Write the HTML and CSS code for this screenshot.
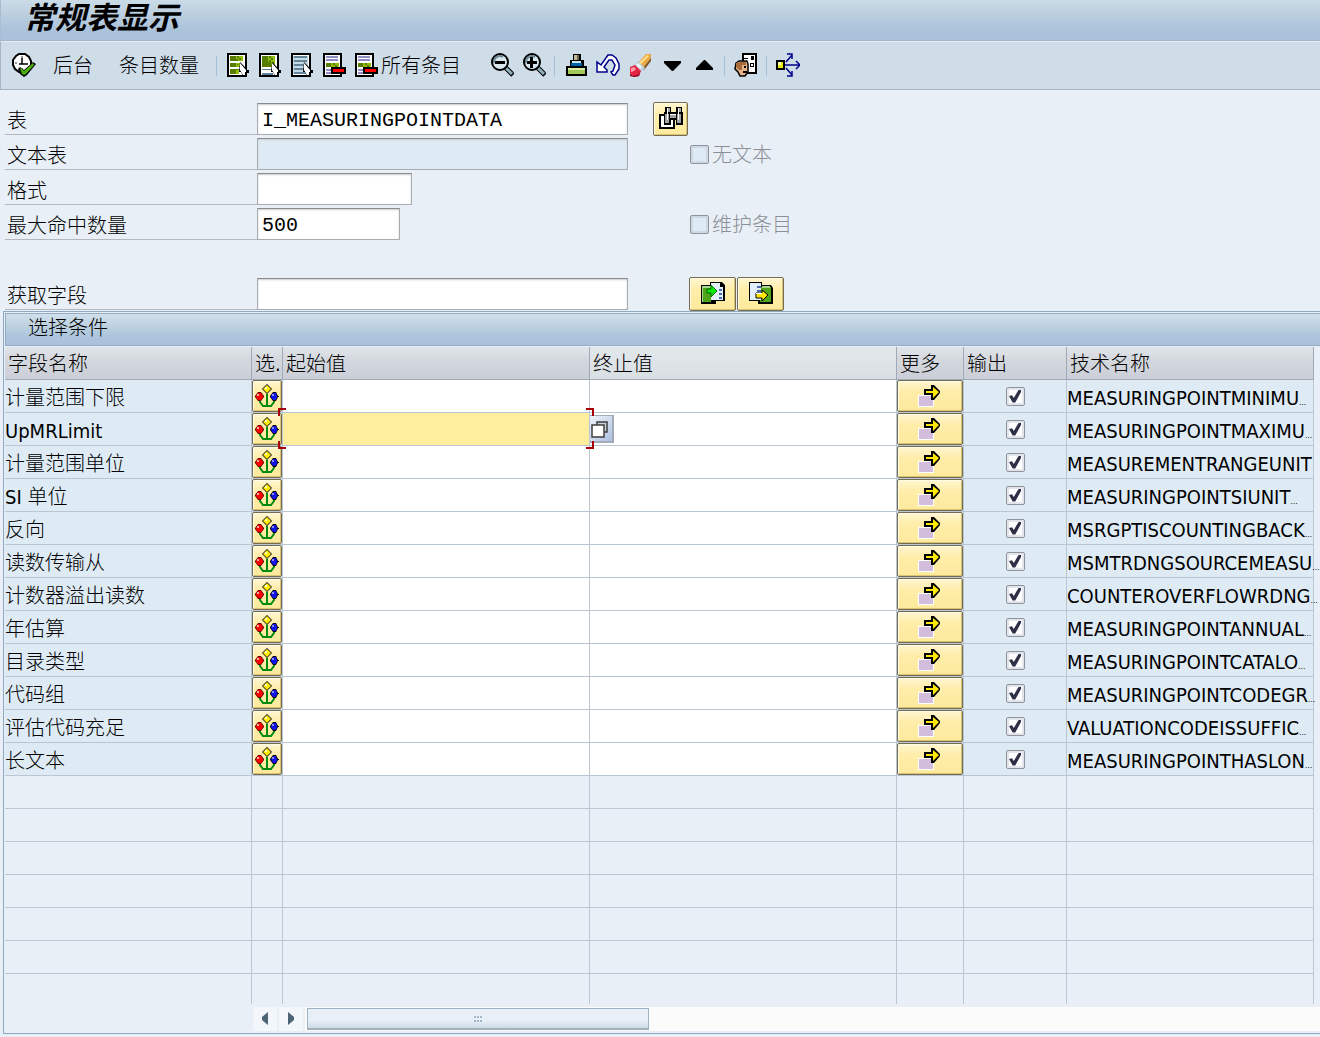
FILE: index.html
```html
<!DOCTYPE html>
<html lang="zh-CN">
<head>
<meta charset="utf-8">
<meta name="viewport" content="width=device-width, initial-scale=1">
<title>常规表显示</title>
<link rel="stylesheet" href="styles.css">
</head>
<body>
<svg class="sprite" aria-hidden="true">
  <symbol id="i-run" viewBox="0 0 24 24">
    <path d="M7 1h6l4 3 2 4v5l-3 4-4 2H7l-4-3-2-4V7l3-4z" fill="#fff" stroke="#000" stroke-width="2"/>
    <path d="M9 3h2v2H9zM3 9h2v2H3zM9 15h2v2H9z" fill="#999"/>
    <path d="M10 5v6M7 11h9" stroke="#000" stroke-width="1.5" fill="none"/>
    <path d="M6 16l2-2 4 3 9-8 3 2-9 11-3 2-4-3z" fill="#000"/>
    <path d="M8 16l1-1 3 3 9-8 1 2-8 9-2 1-2-1z" fill="#4caf10"/>
  </symbol>
  <symbol id="i-cursor" viewBox="0 0 24 24">
    <path d="M14 9l4 4 3 4h2v3h-3v3h-3l-2-4h-2z" fill="#000"/>
    <path d="M14 10l6 7v2h-1v3h-2l-3-5z" fill="#fff"/>
  </symbol>
  <symbol id="i-list" viewBox="0 0 24 24">
    <path d="M2 1h18v22H2z" fill="#fff" stroke="#000" stroke-width="2"/>
    <path d="M4 3h9v5H4zM4 10h9v4H4zM4 16h9v5H4z" fill="#567d00"/>
    <path d="M10 3h7v5h-7zM10 10h4v4h-4zM10 17h3v4h-3z" fill="#8fbd08"/>
    <path d="M11 3h2v2h-2zM13 5h2v2h-2zM10 6h2v2h-2zM11 11h1v1h-1z" fill="#567d00"/>
    <use href="#i-cursor"/>
  </symbol>
  <symbol id="i-block" viewBox="0 0 24 24">
    <path d="M2 1h18v22H2z" fill="#fff" stroke="#000" stroke-width="2"/>
    <path d="M4 3h13v11H4z" fill="#567d00"/>
    <path d="M10 3h7v11h-4V9h-3z" fill="#8fbd08"/>
    <path d="M11 3h2v2h-2zM13 5h2v2h-2zM11 7h2v2h-2zM14 9h2v2h-2z" fill="#567d00"/>
    <path d="M4 16h10v1H4zM4 20h11v2H4z" fill="#5f8096"/>
    <use href="#i-cursor"/>
  </symbol>
  <symbol id="i-lines" viewBox="0 0 24 24">
    <path d="M2 1h18v22H2z" fill="#fff" stroke="#000" stroke-width="2"/>
    <path d="M3 3h15v18H3z" fill="#c6dbe8"/>
    <path d="M4 4h13M4 8h13M4 12h11M4 16h11M4 20h12" stroke="#668598" stroke-width="2"/>
    <use href="#i-cursor"/>
  </symbol>
  <symbol id="i-remove" viewBox="0 0 24 24">
    <path d="M2 1h17v22H2z" fill="#fff" stroke="#000" stroke-width="2"/>
    <path d="M4 4h12M4 7h12M4 17h7M4 20h10" stroke="#8f8dc3" stroke-width="2"/>
    <path d="M4 10h13v4H4z" fill="#8fbd08"/>
    <path d="M4 10h5v4H4zM11 10h2v2h-2zM13 12h2v2h-2z" fill="#567d00"/>
    <path d="M10 15h13v5H10z" fill="#f00" stroke="#000" stroke-width="2"/>
  </symbol>
  <symbol id="i-zoomout" viewBox="0 0 24 24">
    <path d="M15 14l8 8" stroke="#000" stroke-width="5"/>
    <path d="M16 15l6 6" stroke="#91b1bc" stroke-width="3"/>
    <circle cx="10" cy="9" r="8" fill="#d9e7ef" stroke="#000" stroke-width="2"/>
    <path d="M4 10a6 6 0 0 1 9-6" stroke="#6c8997" stroke-width="2" fill="none"/>
    <path d="M5 8h10v3H5z" fill="#000"/>
  </symbol>
  <symbol id="i-zoomin" viewBox="0 0 24 24">
    <use href="#i-zoomout"/>
    <path d="M8 4h3v11H8z" fill="#000"/>
  </symbol>
  <symbol id="i-print" viewBox="0 0 24 24">
    <path d="M9 1h8v6h3v6h3v10H2V13h4V7h3z" fill="#000"/>
    <path d="M10 2h4v5h-4z" fill="#c0ba94"/><path d="M13 2h2v5h-2z" fill="#706a48"/>
    <path d="M8 8h9v2H8z" fill="#cde5f5"/><path d="M7 10h11v3H7z" fill="#0062a8"/>
    <path d="M4 15h17v6H4z" fill="#a4c858"/><path d="M4 15h17v2H4z" fill="#dceaa6"/>
  </symbol>
  <symbol id="i-undo" viewBox="0 0 24 24">
    <path d="M1 9v10h10v-2l-3-3 5-7h3l3 5-2 6-2 1 2 3h2l4-6v-5l-3-6-4-3h-4L5 12z" fill="#fff" stroke="#00008b" stroke-width="1.5"/>
  </symbol>
  <symbol id="i-erase" viewBox="0 0 24 24">
    <path d="M10 10L18 1h5v4l-8 10z" fill="#e8a848"/>
    <path d="M11 10l8-8 2 1-9 9z" fill="#ffe08a"/>
    <path d="M15 15l8-10v3l-7 9z" fill="#80531c"/>
    <path d="M6 12l4-4 7 7-4 4z" fill="#bcd0db"/>
    <path d="M8 12l2-2 4 4-2 2z" fill="#e8f4fa"/>
    <path d="M2 14l5-2 6 6-2 5-5 1-4-3z" fill="#e52545"/>
    <path d="M3 15l3-1 2 2-2 2-3 1z" fill="#ff9cac"/>
    <path d="M2 21l3 2 5-1 2-3-1 4-5 1-4-1z" fill="#800018"/>
  </symbol>
  <symbol id="i-down" viewBox="0 0 24 24"><path d="M4 8h17v2l-8 8h-1L4 10z" fill="#000"/></symbol>
  <symbol id="i-up" viewBox="0 0 24 24"><path d="M4 17h17v-2l-8-8h-1l-8 8z" fill="#000"/></symbol>
  <symbol id="i-user" viewBox="0 0 24 24">
    <path d="M9 1h13v19H9z" fill="#fff" stroke="#000" stroke-width="2"/>
    <path d="M10 5h4v1h-4zM17 3h3v4h-3zM16 10h4v4h-4z" fill="#000"/><path d="M17 11h2v2h-2z" fill="#fff"/>
    <path d="M2 10l3-2h8l1 3v8l-3 4H6l-2-4-3-3z" fill="#e7b585" stroke="#000" stroke-width="1.5"/>
    <path d="M2 10l3-1h7v3H8v5H5l-3-3z" fill="#a76c3c"/><path d="M10 13h2v2h-2zM9 18h4v2H9z" fill="#000"/>
  </symbol>
  <symbol id="i-branch" viewBox="0 0 24 24">
    <path d="M9 12h15M10 9l6-7M10 15l6 7M11 1h5v5M11 23h5v-5M20 8l4 4-4 4" stroke="#00008b" stroke-width="1.5" fill="none"/>
    <path d="M1 8h7v8H1z" fill="#e8ec13" stroke="#000" stroke-width="2"/><path d="M2 9h3v3H2z" fill="#ffffb0"/>
  </symbol>
  <symbol id="i-find" viewBox="0 0 24 24">
    <path d="M1 8h14v13H1z" fill="#fff" stroke="#000" stroke-width="2"/>
    <path d="M6 0h6v5h5V0h6v5h1v13h-7v-5h-5v5H5V5h1z" fill="#000"/>
    <path d="M8 1h3v4H8zM19 1h3v4h-3zM6 7h4v9H6zM11 7h6v4h-6zM18 7h4v9h-4z" fill="#a3a3a3"/>
    <path d="M8 1h1v12H8zM19 1h1v12h-1zM11 7h6v1h-6z" fill="#fff"/>
  </symbol>
  <symbol id="i-import" viewBox="0 0 24 24">
    <path d="M0 3h9V0h12l3 3v16h-9v3H0z" fill="#000"/>
    <path d="M1 4h9v16H1z" fill="#4ea51a"/><path d="M1 4h9v2H1zM1 4h1v16H1z" fill="#a9d88c"/>
    <path d="M10 1h9v4h3v13H10z" fill="#e2f0fa"/><path d="M18 7h3v2h-3zM18 11h3v2h-3zM18 15h3v2h-3z" fill="#506ba8"/>
    <path d="M6 7h4V3l6 6-6 6v-4H6z" fill="#0be60b" stroke="#066a06"/>
  </symbol>
  <symbol id="i-export" viewBox="0 0 24 24">
    <path d="M0 0h13v3h9l2 3v16H9v-3H0z" fill="#000"/>
    <path d="M12 5h10v15H11z" fill="#4ea51a"/><path d="M13 4h8v2h-8z" fill="#a9d88c"/>
    <path d="M1 1h11v17H1z" fill="#e2f0fa"/><path d="M8 4h4v2H8zM8 8h4v2H8z" fill="#506ba8"/>
    <path d="M7 11h6V8l6 5-6 6v-3H7z" fill="#ffe800" stroke="#000"/><path d="M7 11h6v1H7z" fill="#fff"/>
  </symbol>
  <symbol id="i-option" viewBox="0 0 24 24">
    <path d="M11 10h2v12h-2z" fill="#008a10"/>
    <path d="M5 16v2l3 4h8l3-4v-2" stroke="#008a10" stroke-width="2" fill="none"/>
    <path d="M12 0l5 5-5 5-5-5z" fill="#000"/><path d="M12 1l4 4-4 4-4-4z" fill="#ffec00"/><path d="M10 3h2v2h-2z" fill="#ffffc0"/>
    <path d="M3 8h3l3 4v1l-3 4H3l-3-4v-1z" fill="#600"/><path d="M3 9h3l2 3v1l-2 3H3l-2-3v-1z" fill="#f00"/><path d="M2 10h2v2H2z" fill="#faa"/>
    <path d="M18 8h3l2 4h1v1h-1l-2 4h-3l-3-4v-1z" fill="#000"/><path d="M18 9h3l1 3v1l-1 3h-3l-2-3v-1z" fill="#1414e8"/><path d="M17 10h2v2h-2z" fill="#88f"/>
  </symbol>
  <symbol id="i-more" viewBox="0 0 24 24">
    <path d="M0 11h16v12H0z" fill="#fff"/><path d="M1 12h14v10H1z" fill="#d3bddd"/>
    <path d="M6 5h7V1h3l6 6v2l-6 7h-3v-5H6z" fill="#000"/>
    <path d="M8 7h7V3l6 5-6 6v-5H8z" fill="#ffe900"/>
  </symbol>
  <symbol id="i-match" viewBox="0 0 20 20">
    <path d="M7 3h10v10H7z" fill="#c3d4de" stroke="#403c3c" stroke-width="1.5"/>
    <path d="M2 6h12v12H2z" fill="#fff" stroke="#403c3c" stroke-width="1.5"/>
  </symbol>
</svg>

<header class="titlebar"><h1>常规表显示</h1></header>

<nav class="toolbar" aria-label="工具栏">
  <button class="tool" aria-label="执行"><svg><use href="#i-run"/></svg></button>
  <button class="tool text">后台</button>
  <button class="tool text">条目数量</button>
  <span class="sep"></span>
  <button class="tool" aria-label="全选"><svg><use href="#i-list"/></svg></button>
  <button class="tool" aria-label="选择块"><svg><use href="#i-block"/></svg></button>
  <button class="tool" aria-label="取消全选"><svg><use href="#i-lines"/></svg></button>
  <button class="tool" aria-label="删除条目"><svg><use href="#i-remove"/></svg></button>
  <button class="tool wide"><svg><use href="#i-remove"/></svg>所有条目</button>
  <button class="tool" aria-label="缩小"><svg><use href="#i-zoomout"/></svg></button>
  <button class="tool" aria-label="放大"><svg><use href="#i-zoomin"/></svg></button>
  <span class="sep"></span>
  <button class="tool" aria-label="变式"><svg><use href="#i-print"/></svg></button>
  <button class="tool" aria-label="撤销"><svg><use href="#i-undo"/></svg></button>
  <button class="tool" aria-label="清除"><svg><use href="#i-erase"/></svg></button>
  <button class="tool" aria-label="下移"><svg><use href="#i-down"/></svg></button>
  <button class="tool" aria-label="上移"><svg><use href="#i-up"/></svg></button>
  <span class="sep"></span>
  <button class="tool" aria-label="用户设置"><svg><use href="#i-user"/></svg></button>
  <span class="sep"></span>
  <button class="tool" aria-label="分支"><svg><use href="#i-branch"/></svg></button>
</nav>

<main>
  <form class="form">
    <div class="field">
      <label for="table">表</label>
      <input id="table" class="box long" type="text" value="I_MEASURINGPOINTDATA">
      <button type="button" class="yellow find" aria-label="查找"><svg><use href="#i-find"/></svg></button>
    </div>
    <div class="field">
      <label for="texttable">文本表</label>
      <input id="texttable" class="box long" type="text" disabled>
      <label class="option"><input type="checkbox" class="tick" disabled><span>无文本</span></label>
    </div>
    <div class="field">
      <label for="layout">格式</label>
      <input id="layout" class="box medium" type="text">
    </div>
    <div class="field">
      <label for="hits">最大命中数量</label>
      <span class="slot"><input id="hits" class="box short" type="text" value="500"></span>
      <label class="option"><input type="checkbox" class="tick" disabled><span>维护条目</span></label>
    </div>
    <div class="field spaced">
      <label for="getfield">获取字段</label>
      <input id="getfield" class="box long" type="text">
      <span class="pair">
        <button type="button" class="yellow" aria-label="导入"><svg><use href="#i-import"/></svg></button>
        <button type="button" class="yellow" aria-label="导出"><svg><use href="#i-export"/></svg></button>
      </span>
    </div>
  </form>

  <section class="panel">
    <h2>选择条件</h2>
    <table class="grid">
      <colgroup><col class="c-name"><col class="c-sel"><col><col><col class="c-more"><col class="c-out"><col class="c-name"></colgroup>
      <thead><tr><th>字段名称</th><th class="tight">选.</th><th>起始值</th><th class="light">终止值</th><th>更多</th><th>输出</th><th>技术名称</th></tr></thead>
      <tbody>
        <tr><td class="txt">计量范围下限</td><td><button class="yellow" aria-label="选项"><svg><use href="#i-option"/></svg></button></td><td class="value"><input type="text" aria-label="起始值"></td><td class="value"><input type="text" aria-label="终止值"></td><td><button class="yellow" aria-label="更多"><svg><use href="#i-more"/></svg></button></td><td class="out"><input type="checkbox" class="tick" aria-label="输出" checked></td><td class="txt">MEASURINGPOINTMINIMU<small>…</small></td></tr>
        <tr><td class="txt">UpMRLimit</td><td><button class="yellow" aria-label="选项"><svg><use href="#i-option"/></svg></button></td><td class="value active"><input type="text" aria-label="起始值"><span class="focus"></span></td><td class="value"><input type="text" aria-label="终止值"><button class="match" aria-label="可能的条目"><svg><use href="#i-match"/></svg></button></td><td><button class="yellow" aria-label="更多"><svg><use href="#i-more"/></svg></button></td><td class="out"><input type="checkbox" class="tick" aria-label="输出" checked></td><td class="txt">MEASURINGPOINTMAXIMU<small>…</small></td></tr>
        <tr><td class="txt">计量范围单位</td><td><button class="yellow" aria-label="选项"><svg><use href="#i-option"/></svg></button></td><td class="value"><input type="text" aria-label="起始值"></td><td class="value"><input type="text" aria-label="终止值"></td><td><button class="yellow" aria-label="更多"><svg><use href="#i-more"/></svg></button></td><td class="out"><input type="checkbox" class="tick" aria-label="输出" checked></td><td class="txt">MEASUREMENTRANGEUNIT</td></tr>
        <tr><td class="txt">SI 单位</td><td><button class="yellow" aria-label="选项"><svg><use href="#i-option"/></svg></button></td><td class="value"><input type="text" aria-label="起始值"></td><td class="value"><input type="text" aria-label="终止值"></td><td><button class="yellow" aria-label="更多"><svg><use href="#i-more"/></svg></button></td><td class="out"><input type="checkbox" class="tick" aria-label="输出" checked></td><td class="txt">MEASURINGPOINTSIUNIT<small>…</small></td></tr>
        <tr><td class="txt">反向</td><td><button class="yellow" aria-label="选项"><svg><use href="#i-option"/></svg></button></td><td class="value"><input type="text" aria-label="起始值"></td><td class="value"><input type="text" aria-label="终止值"></td><td><button class="yellow" aria-label="更多"><svg><use href="#i-more"/></svg></button></td><td class="out"><input type="checkbox" class="tick" aria-label="输出" checked></td><td class="txt">MSRGPTISCOUNTINGBACK<small>…</small></td></tr>
        <tr><td class="txt">读数传输从</td><td><button class="yellow" aria-label="选项"><svg><use href="#i-option"/></svg></button></td><td class="value"><input type="text" aria-label="起始值"></td><td class="value"><input type="text" aria-label="终止值"></td><td><button class="yellow" aria-label="更多"><svg><use href="#i-more"/></svg></button></td><td class="out"><input type="checkbox" class="tick" aria-label="输出" checked></td><td class="txt">MSMTRDNGSOURCEMEASU<small>…</small></td></tr>
        <tr><td class="txt">计数器溢出读数</td><td><button class="yellow" aria-label="选项"><svg><use href="#i-option"/></svg></button></td><td class="value"><input type="text" aria-label="起始值"></td><td class="value"><input type="text" aria-label="终止值"></td><td><button class="yellow" aria-label="更多"><svg><use href="#i-more"/></svg></button></td><td class="out"><input type="checkbox" class="tick" aria-label="输出" checked></td><td class="txt">COUNTEROVERFLOWRDNG<small>…</small></td></tr>
        <tr><td class="txt">年估算</td><td><button class="yellow" aria-label="选项"><svg><use href="#i-option"/></svg></button></td><td class="value"><input type="text" aria-label="起始值"></td><td class="value"><input type="text" aria-label="终止值"></td><td><button class="yellow" aria-label="更多"><svg><use href="#i-more"/></svg></button></td><td class="out"><input type="checkbox" class="tick" aria-label="输出" checked></td><td class="txt">MEASURINGPOINTANNUAL<small>…</small></td></tr>
        <tr><td class="txt">目录类型</td><td><button class="yellow" aria-label="选项"><svg><use href="#i-option"/></svg></button></td><td class="value"><input type="text" aria-label="起始值"></td><td class="value"><input type="text" aria-label="终止值"></td><td><button class="yellow" aria-label="更多"><svg><use href="#i-more"/></svg></button></td><td class="out"><input type="checkbox" class="tick" aria-label="输出" checked></td><td class="txt">MEASURINGPOINTCATALO<small>…</small></td></tr>
        <tr><td class="txt">代码组</td><td><button class="yellow" aria-label="选项"><svg><use href="#i-option"/></svg></button></td><td class="value"><input type="text" aria-label="起始值"></td><td class="value"><input type="text" aria-label="终止值"></td><td><button class="yellow" aria-label="更多"><svg><use href="#i-more"/></svg></button></td><td class="out"><input type="checkbox" class="tick" aria-label="输出" checked></td><td class="txt">MEASURINGPOINTCODEGR<small>…</small></td></tr>
        <tr><td class="txt">评估代码充足</td><td><button class="yellow" aria-label="选项"><svg><use href="#i-option"/></svg></button></td><td class="value"><input type="text" aria-label="起始值"></td><td class="value"><input type="text" aria-label="终止值"></td><td><button class="yellow" aria-label="更多"><svg><use href="#i-more"/></svg></button></td><td class="out"><input type="checkbox" class="tick" aria-label="输出" checked></td><td class="txt">VALUATIONCODEISSUFFIC<small>…</small></td></tr>
        <tr><td class="txt">长文本</td><td><button class="yellow" aria-label="选项"><svg><use href="#i-option"/></svg></button></td><td class="value"><input type="text" aria-label="起始值"></td><td class="value"><input type="text" aria-label="终止值"></td><td><button class="yellow" aria-label="更多"><svg><use href="#i-more"/></svg></button></td><td class="out"><input type="checkbox" class="tick" aria-label="输出" checked></td><td class="txt">MEASURINGPOINTHASLON<small>…</small></td></tr>
      </tbody>
      <tbody class="blank">
        <tr><td></td><td></td><td></td><td></td><td></td><td></td><td></td></tr>
        <tr><td></td><td></td><td></td><td></td><td></td><td></td><td></td></tr>
        <tr><td></td><td></td><td></td><td></td><td></td><td></td><td></td></tr>
        <tr><td></td><td></td><td></td><td></td><td></td><td></td><td></td></tr>
        <tr><td></td><td></td><td></td><td></td><td></td><td></td><td></td></tr>
        <tr><td></td><td></td><td></td><td></td><td></td><td></td><td></td></tr>
        <tr><td></td><td></td><td></td><td></td><td></td><td></td><td></td></tr>
      </tbody>
    </table>
    <div class="scroll">
      <button class="step" aria-label="向左滚动"><svg viewBox="0 0 24 24"><path d="M15 5v13l-6-5v-3z"/></svg></button>
      <button class="step" aria-label="向右滚动"><svg viewBox="0 0 24 24"><path d="M9 5v13l6-5v-3z"/></svg></button>
      <div class="track"><div class="thumb"><i></i><i></i><i></i><i></i><i></i><i></i></div></div>
    </div>
  </section>
</main>
</body>
</html>
```
FILE: styles.css
```css
* { box-sizing: border-box; }

body {
  margin: 0;
  background: #e8eff6;
  color: #000;
  font: 300 20px/24px "DejaVu Sans Condensed", "Noto Sans CJK SC", sans-serif;
}

button, input { font: inherit; color: inherit; margin: 0; padding: 0; border: 0; border-radius: 0; }
button { background: none; white-space: nowrap; }
svg { width: 24px; height: 24px; display: block; flex: none; }
.sprite { position: absolute; width: 0; height: 0; }

/* Title and toolbar */
.titlebar {
  height: 41px;
  padding-left: 23px;
  border-bottom: 1px solid #a3b5c9;
  border-left: 1px solid #a9bdd0;
  background: linear-gradient(#cbdce8, #bfd1e0 30%, #abc2db 75%, #a9c1da);
}
h1 { margin: 0; font-size: 31px; line-height: 36px; font-style: italic; font-weight: bold; }

.toolbar {
  display: flex;
  align-items: center;
  gap: 8px;
  height: 49px;
  padding-left: 11px;
  border: solid #a5b5c7;
  border-width: 0 0 1px 1px;
  border-top: 1px solid #e6eff6;
  background: #cfdde8;
}
.tool { display: flex; align-items: center; gap: 3px; }
.text { padding: 0 9px; }
.wide { margin-right: 21px; }
.sep { width: 1px; height: 20px; margin-right: 1px; background: #a4c0dc; }
.toolbar svg { margin-bottom: 2px; }

/* Selection form */
.form { padding: 13px 0 0 5px; }
.field { display: flex; height: 32px; margin-bottom: 3px; }
.field > label:first-child {
  width: 252px;
  padding: 6px 0 0 2px;
  border-bottom: 1px solid #b4b8bc;
}
.spaced { margin-top: 38px; margin-bottom: 1px; }
.box {
  height: 32px;
  padding: 2px 4px 0;
  border: 1px solid #a9adb1;
  border-top-color: #888c91;
  background: #fff;
  box-shadow: inset 0 1px 2px #ccc;
  font-family: "Liberation Mono", monospace;
}
.box:disabled { background: #deebf5; }
.long, .slot { width: 371px; }
.medium { width: 155px; }
.short { width: 143px; }

.yellow {
  display: flex;
  align-items: center;
  justify-content: center;
  border: 1px solid #746b50;
  border-radius: 2px;
  background: linear-gradient(#fff6d2, #ffedaa 35%, #fdea9c);
  box-shadow: inset 1px 1px #fffbe6, inset -1px -1px #d9c273;
}
.find { width: 35px; height: 34px; margin: -1px 0 0 25px; }
.pair { display: flex; gap: 1px; margin: -1px 0 0 61px; }
.pair .yellow { width: 47px; height: 34px; }

.option { display: flex; align-items: center; gap: 3px; margin-left: 62px; color: #8c9096; }
.option span { padding-top: 2px; }
.tick {
  appearance: none;
  display: grid;
  place-content: center;
  width: 19px;
  height: 19px;
  border: 1px solid #8f939b;
  border-radius: 2px;
  background: #fff;
  box-shadow: inset 0 0 0 2px #e3e5ec;
}
.tick:disabled { background: #deebf5; box-shadow: inset 0 0 0 2px #cfd8e5; }
.tick:checked::before {
  content: "";
  width: 12px;
  height: 13px;
  background: #2c2f45;
  clip-path: polygon(0 50%, 25% 45%, 40% 65%, 78% 5%, 100% 0, 100% 20%, 52% 100%, 30% 100%);
}

/* Table panel */
.panel {
  margin-left: 3px;
  padding: 1px 0 2px 1px;
  border: solid #8fa9c2;
  border-width: 1px 0 1px 1px;
}
h2 {
  height: 33px;
  margin: 0 0 1px;
  padding-left: 22px;
  border: 1px solid #93acc5;
  border-right: 0;
  background: linear-gradient(#cfe0ec, #c0d3e0 35%, #adc6dd 70%, #a9c1da);
  font-size: 20px;
  font-weight: inherit;
  line-height: 28px;
}

.grid { width: calc(100% - 6px); table-layout: fixed; border-collapse: separate; border-spacing: 0; }
.c-name { width: 247px; }
.c-sel { width: 31px; }
.c-more { width: 67px; }
.c-out { width: 103px; }
th {
  height: 33px;
  padding: 2px 0 0 3px;
  border: solid #a0a9b8;
  border-width: 0 1px 1px 0;
  background: linear-gradient(#e1e6eb, #d4d8de 40%, #cbced7);
  font-weight: inherit;
  text-align: left;
}
.tight { overflow: hidden; white-space: nowrap; }
.light { background: linear-gradient(#e2e7eb, #d9e0e4); }
td {
  position: relative;
  height: 33px;
  padding: 0;
  border: solid #bbc6d3;
  border-width: 0 1px 1px 0;
  background: #deebf5;
  white-space: nowrap;
}
.txt { padding-top: 3px; }
td .yellow { width: 100%; height: 32px; }
td small { font-size: 8px; line-height: 8px; }
.value, .value input { background: #fff; }
.value input { display: block; width: 100%; height: 32px; padding: 0 4px; outline: 0; }
.active input { background: #ffee9e; }
.out .tick { margin: 0 auto; }
.blank td { background: none; }
.blank tr:last-child td { height: 30px; border-bottom: 0; }

/* Corner brackets round the active cell */
.focus {
  --c: linear-gradient(#a80008, #a80008);
  position: absolute;
  z-index: 1;
  inset: -5px -5px -4px -5px;
  pointer-events: none;
  background: var(--c) 0 0 / 8px 2px, var(--c) 0 0 / 2px 8px, var(--c) 100% 0 / 8px 2px, var(--c) 100% 0 / 2px 8px,
    var(--c) 0 100% / 8px 2px, var(--c) 0 100% / 2px 8px, var(--c) 100% 100% / 8px 2px, var(--c) 100% 100% / 2px 8px;
  background-repeat: no-repeat;
}
.match {
  position: absolute;
  left: 0;
  top: 2px;
  width: 24px;
  height: 28px;
  border: solid #a3aab8;
  border-width: 1px 2px 2px 0;
  background: linear-gradient(135deg, #f0f4fb, #adc0e0);
}
.match svg { width: 20px; height: 20px; }

/* Horizontal scroll bar */
.scroll { display: flex; gap: 2px; height: 24px; margin: 3px 0 0 248px; }
.step { width: 24px; background: #f3f6fb; }
.step path { fill: #4d6474; }
.track { flex: 1; padding: 1px 0 0 2px; background: #fbfbfb; }
.thumb {
  display: grid;
  grid-template-columns: repeat(3, 2px);
  gap: 2px 1px;
  place-content: center;
  width: 342px;
  height: 22px;
  border: 1px solid #9db2c2;
  border-bottom: 2px solid #a3b0ba;
  background: linear-gradient(#e8eff6 60%, #cbdae6);
}
.thumb i { width: 2px; height: 2px; background: #a5b7c6; }
```
